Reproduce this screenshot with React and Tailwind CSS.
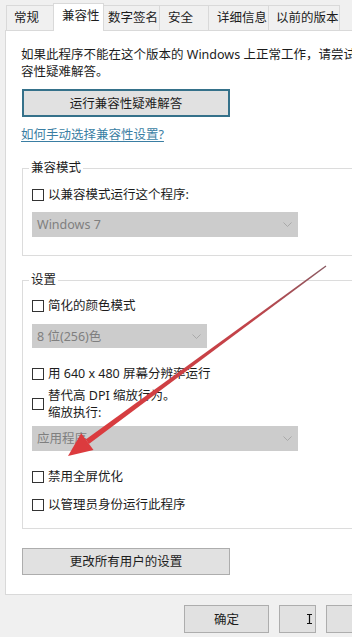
import React from "react";

function Checkbox() {
  return <span className="block w-[12px] h-[12px] border border-[#333333] bg-white shrink-0" />;
}

function CheckRow({ label, className = "" }) {
  return (
    <div className={"flex items-center h-[17px] pl-[9px] gap-[4px] " + className}>
      <Checkbox />
      <span className="whitespace-nowrap leading-[17px]">{label}</span>
    </div>
  );
}

function Chevron() {
  return (
    <svg width="9" height="5" viewBox="0 0 9 5" className="shrink-0">
      <path d="M0.5 0.5 L4.5 4.5 L8.5 0.5" fill="none" stroke="#a9a9a9" strokeWidth="1" />
    </svg>
  );
}

function Select({ text, className = "" }) {
  return (
    <div className={"ml-[9px] bg-[#cccccc] flex items-center justify-between pl-[5px] pr-[6px] text-[#7f7f7f] " + className}>
      <span className="whitespace-nowrap leading-[17px]">{text}</span>
      <Chevron />
    </div>
  );
}

function Group({ label, className = "", children }) {
  return (
    <div className={"relative ml-px border border-[#dcdcdc] " + className}>
      <span className="absolute -top-[10px] left-[6px] bg-white px-[2px] leading-[17px] whitespace-nowrap">{label}</span>
      {children}
    </div>
  );
}

function Arrow() {
  return (
    <svg className="absolute left-0 top-0 pointer-events-none" width="352" height="637" viewBox="0 0 352 637">
      <defs>
        <linearGradient id="shaft" x1="326" y1="266" x2="86" y2="442" gradientUnits="userSpaceOnUse">
          <stop offset="0" stopColor="#8a5a62" />
          <stop offset="0.3" stopColor="#c0444a" />
          <stop offset="1" stopColor="#dc3b3e" />
        </linearGradient>
      </defs>
      <polygon points="325.6,265.5 326.4,266.5 88.9,443.9 85.7,439.5" fill="url(#shaft)" />
      <polygon points="68,456 93.5,450 81.2,433.2" fill="#dc3b3e" />
    </svg>
  );
}

export default function App() {
  const tabBase = "h-[25px] border border-b-0 border-[#d9d9d9] bg-[#f0f0f0] leading-[24px] whitespace-nowrap -ml-px first:ml-0";
  return (
    <div className="relative w-[352px] h-[637px] overflow-hidden bg-[#f0f0f0] text-[#1c1c1c] text-[12.5px] font-['Noto_Sans','Noto_Sans_CJK_SC',sans-serif]">
      {/* Tabs */}
      <div className="flex items-end h-[30px] pl-[6px]">
        <div className={tabBase + " w-[48px] pl-[7px]"}>常规</div>
        <div className="relative z-10 h-[28px] -mb-px w-[51px] pl-[8px] border border-b-0 border-[#d9d9d9] bg-white leading-[24px] whitespace-nowrap -ml-px">兼容性</div>
        <div className={tabBase + " w-[57px] pl-[4px]"}>数字签名</div>
        <div className={tabBase + " w-[50px] pl-[8px]"}>安全</div>
        <div className={tabBase + " w-[61px] pl-[8px]"}>详细信息</div>
        <div className={tabBase + " w-[72px] pl-[7px]"}>以前的版本</div>
      </div>

      {/* Panel */}
      <div className="ml-[5px] w-[380px] h-[565px] border border-[#d9d9d9] bg-white pl-[15px] pr-[14px] pt-[15px]">
        <div className="leading-[17px] whitespace-nowrap">
          <div>如果此程序不能在这个版本的 Windows 上正常工作，请尝试运行兼</div>
          <div>容性疑难解答。</div>
        </div>

        <button className="mt-[9px] ml-px w-[208px] h-[28px] border-2 border-[#35718a] bg-[#e1e1e1] flex items-center justify-center leading-[17px]">
          运行兼容性疑难解答
        </button>

        <div className="mt-[9px] leading-[17px]">
          <span className="text-[#3a7ea3] underline underline-offset-[2px] decoration-[#3a7ea3]">如何手动选择兼容性设置?</span>
        </div>

        <Group label="兼容模式" className="mt-[25px] pt-[17px] pb-[18px]">
          <CheckRow label="以兼容模式运行这个程序:" />
          <Select text="Windows 7" className="mt-[9px] w-[266px] h-[25px]" />
        </Group>

        <Group label="设置" className="mt-[24px] pt-[16px] pb-[15px]">
          <CheckRow label="简化的颜色模式" />
          <Select text="8 位(256)色" className="mt-[10px] w-[175px] h-[24px]" />
          <CheckRow label="用 640 x 480 屏幕分辨率运行" className="mt-[17px]" />
          <div className="mt-[5px] flex items-center pl-[9px] gap-[4px]">
            <Checkbox />
            <div className="leading-[17px] whitespace-nowrap">
              <div>替代高 DPI 缩放行为。</div>
              <div>缩放执行:</div>
            </div>
          </div>
          <Select text="应用程序" className="mt-[5px] w-[266px] h-[25px]" />
          <CheckRow label="禁用全屏优化" className="mt-[17px]" />
          <CheckRow label="以管理员身份运行此程序" className="mt-[11px]" />
        </Group>

        <button className="mt-[19px] ml-px w-[208px] h-[27px] border border-[#adadad] bg-[#e1e1e1] flex items-center justify-center leading-[17px]">
          更改所有用户的设置
        </button>
      </div>

      {/* Bottom buttons */}
      <div className="mt-[10px] ml-[184px] flex gap-[10px]">
        <button className="shrink-0 w-[85px] h-[28px] border border-[#adadad] bg-[#e1e1e1] flex items-center justify-center leading-[17px]">
          确定
        </button>
        <button className="shrink-0 w-[37px] h-[28px] border border-[#adadad] bg-[#e1e1e1] flex items-center justify-end pr-[3px]">
          <svg width="5" height="10" viewBox="0 0 5 10">
            <path d="M0 0.5 H5 M0 9.5 H5 M2.5 0.5 V9.5" stroke="#111" strokeWidth="1.2" fill="none" />
          </svg>
        </button>
        <button className="shrink-0 w-[85px] h-[28px] border border-[#adadad] bg-[#e1e1e1]" />
      </div>

      <Arrow />
    </div>
  );
}
